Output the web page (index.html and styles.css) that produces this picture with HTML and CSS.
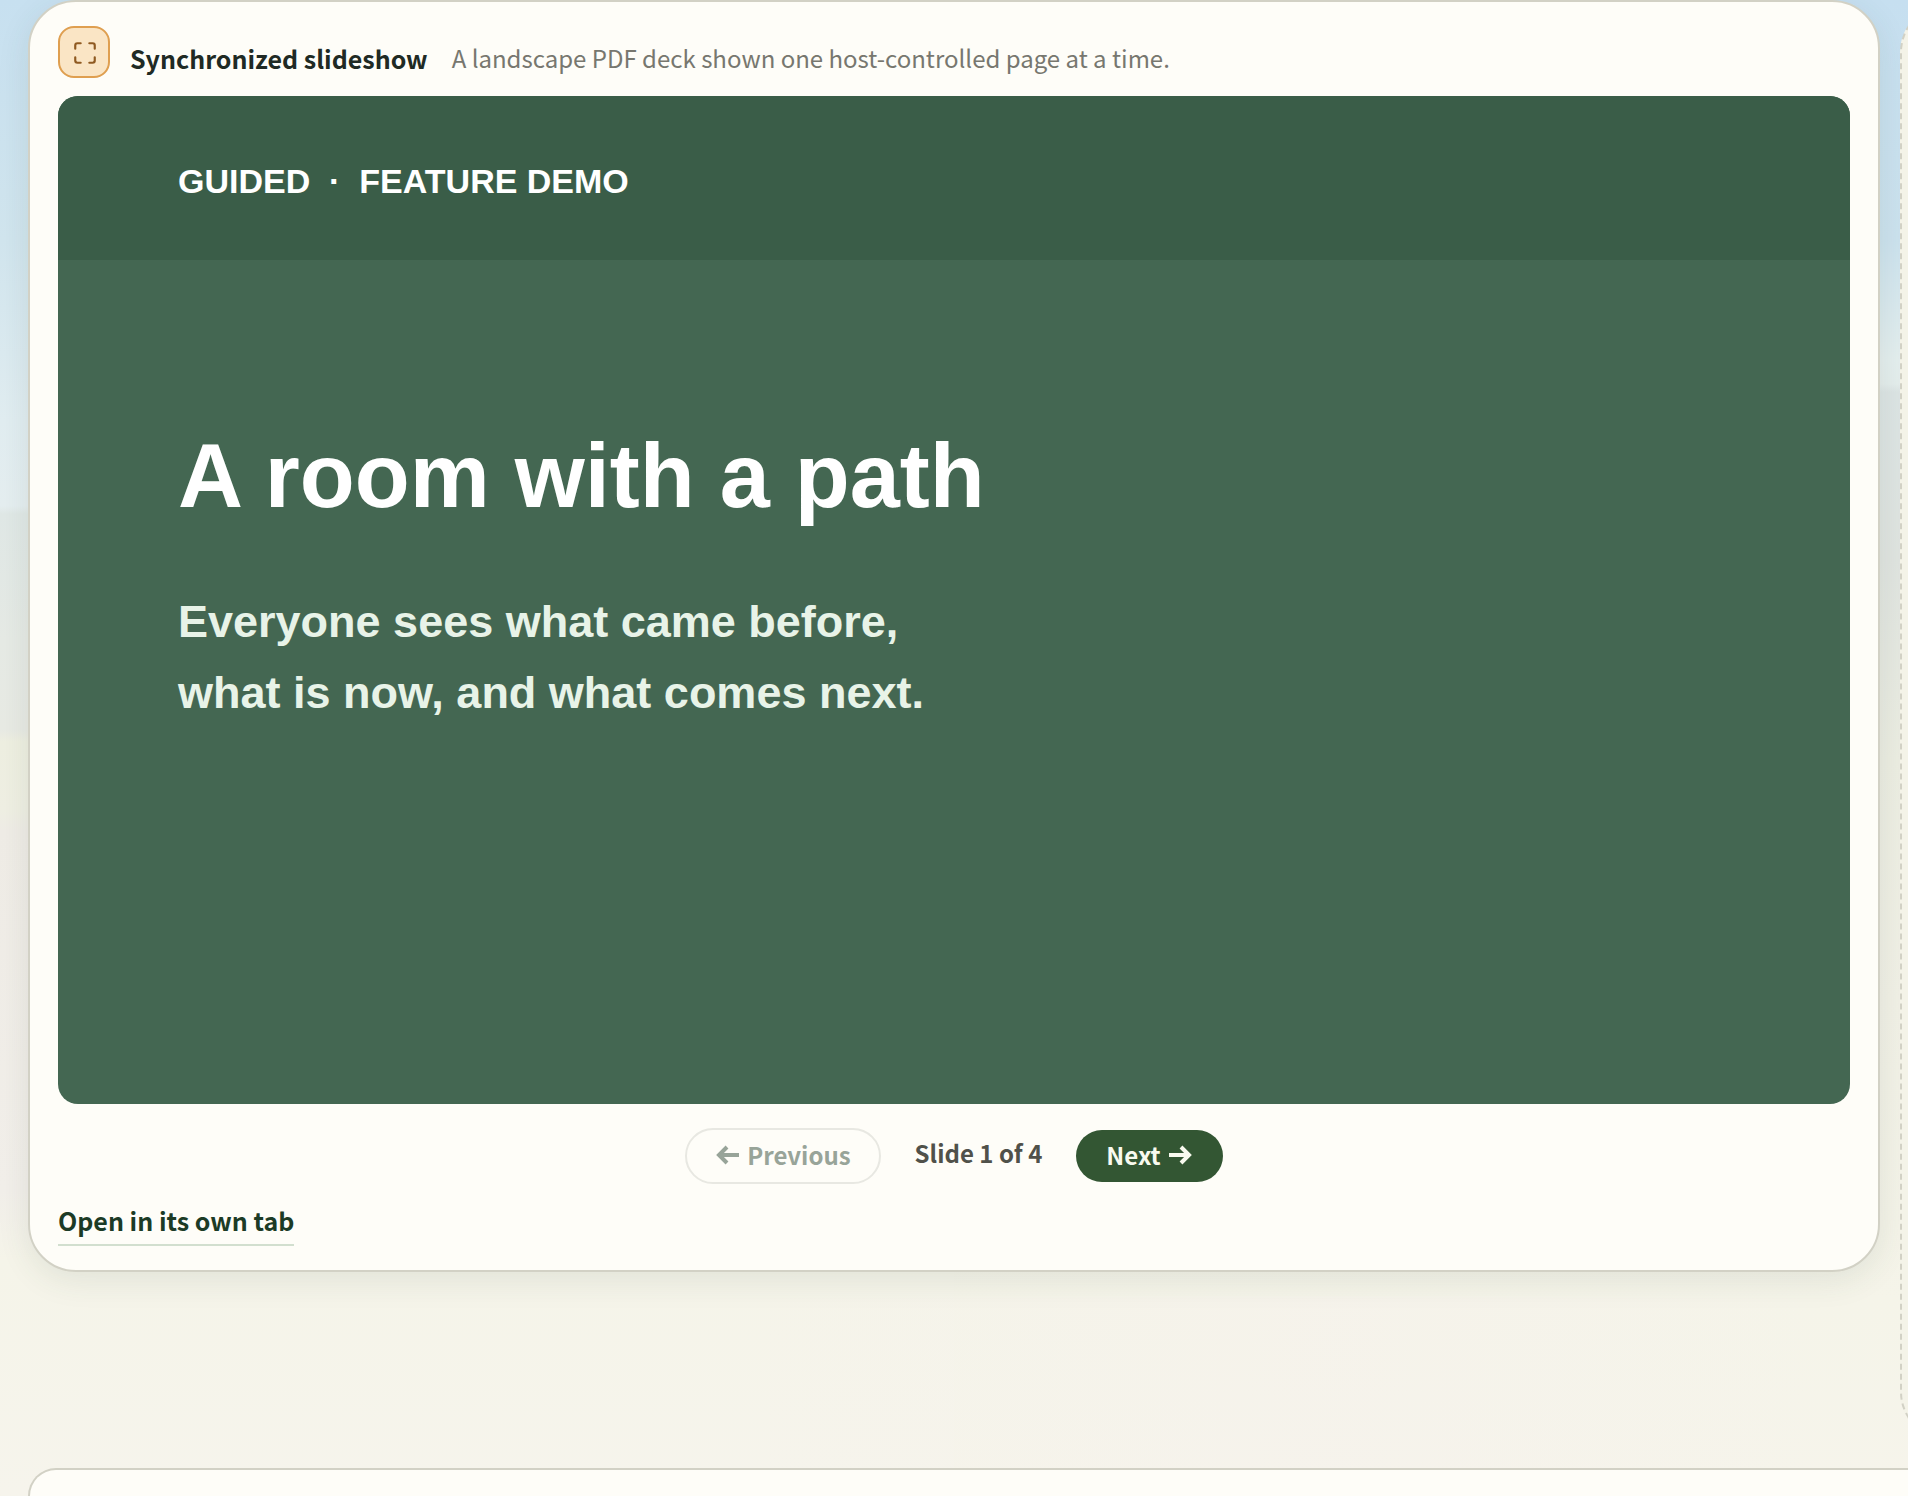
FILE: index.html
```html
<!DOCTYPE html>
<html lang="en">
<head>
<meta charset="utf-8">
<meta name="viewport" content="width=device-width, initial-scale=1">
<title>Synchronized slideshow</title>
<link rel="stylesheet" href="styles.css">
</head>
<body>
<main class="page">
  <div class="track">
    <article class="card">
      <header class="card-header">
        <span class="badge">
          <svg class="badge-icon" viewBox="0 0 24 24" aria-hidden="true">
            <path d="M8 3H5a2 2 0 0 0-2 2v3"/>
            <path d="M16 3h3a2 2 0 0 1 2 2v3"/>
            <path d="M8 21H5a2 2 0 0 1-2-2v-3"/>
            <path d="M16 21h3a2 2 0 0 0 2-2v-3"/>
          </svg>
        </span>
        <h2 class="card-title">Synchronized slideshow</h2>
        <p class="card-note">A landscape PDF deck shown one host-controlled page at a time.</p>
      </header>
      <section class="slide" aria-label="Current slide">
        <div class="slide-band">GUIDED&nbsp; ·&nbsp; FEATURE DEMO</div>
        <div class="slide-body">
          <h1 class="slide-title">A room with a path</h1>
          <p class="slide-text">Everyone sees what came before,<br>what is now, and what comes next.</p>
        </div>
      </section>
      <nav class="controls" aria-label="Slides">
        <button class="button button-previous" type="button" disabled>
          <svg class="arrow" viewBox="0 0 24 20" aria-hidden="true"><path d="M24 10H4M12 2l-8 8 8 8"/></svg>
          Previous
        </button>
        <span class="position">Slide 1 of 4</span>
        <button class="button button-next" type="button">
          Next
          <svg class="arrow" viewBox="0 0 24 20" aria-hidden="true"><path d="M0 10h20M12 2l8 8-8 8"/></svg>
        </button>
      </nav>
      <a class="open-link" href="#">Open in its own tab</a>
    </article>
    <aside class="upcoming" aria-label="Next step"></aside>
  </div>
  <section class="panel" aria-label="Details"></section>
</main>
</body>
</html>
```
FILE: styles.css
```css
* {
  box-sizing: border-box;
}

body {
  margin: 0;
  font-family: "Noto Sans CJK SC", "Noto Sans", sans-serif;
  color: #202a24;
  background-color: #f5f3ea;
}

h1, h2, p {
  margin: 0;
}

.page {
  display: flex;
  flex-direction: column;
  min-height: 100vh;
  padding-left: 28px;
  overflow: hidden;
  background:
    linear-gradient(to right, transparent 40%, rgba(246, 242, 236, 0.6) 70%, transparent 95%) bottom / 100% 200px no-repeat,
    linear-gradient(#c6dff0 0, #cce2ee 240px, #e4eeee 360px, #e4edec 384px, #dce4e4 392px, #e0e4e0 560px, #ecede2 760px, #f1f0e6 1000px, #f5f4e9 1300px, #f6f4eb 100%) right / 50% 100% no-repeat,
    linear-gradient(#c7e0f0 0, #d1e5ee 240px, #e1edf1 420px, #e5eef0 506px, #e0e8e6 514px, #e6eae5 640px, #e8eae4 730px, #eeefe1 742px, #efefe3 810px, #efece6 830px, #f2efea 1190px, #f5f4e9 1260px, #f6f4ec 100%);
}

.track {
  display: flex;
  align-items: flex-start;
  gap: 20px;
  padding-bottom: 28px;
}

.card {
  display: flex;
  flex: 0 0 calc(100% - 28px);
  flex-direction: column;
  padding: 24px 28px;
  border: 2px solid #d2d1c5;
  border-radius: 48px;
  background: #fefdf8;
  box-shadow: 0 8px 32px rgba(50, 75, 60, 0.1);
}

.card-header {
  display: flex;
  align-items: center;
  margin-bottom: 18px;
}

.badge {
  display: grid;
  flex: none;
  place-items: center;
  width: 52px;
  height: 52px;
  margin-right: 20px;
  padding: 2px 0 0 2px;
  border: 2px solid #df9f50;
  border-radius: 16px;
  background: #fae5c5;
}

.badge-icon {
  width: 26px;
  height: 26px;
  fill: none;
  stroke: #8f5a21;
  stroke-width: 2;
  stroke-linecap: round;
  stroke-linejoin: round;
}

.card-title,
.card-note {
  padding-top: 12px;
  line-height: 40px;
}

.card-title {
  margin-right: 24px;
  font-size: 25px;
  font-weight: 700;
}

.card-note {
  font-size: 24px;
  font-weight: 400;
  color: #77776f;
}

.slide {
  aspect-ratio: 16 / 9;
  overflow: hidden;
  border-radius: 20px;
  background: #446752;
  color: #fff;
  font-family: "Liberation Sans", Arial, sans-serif;
  font-weight: 700;
}

.slide-band {
  height: 164px;
  padding: 65px 120px 0;
  background: #3a5d48;
  font-size: 34px;
  line-height: 40px;
}

.slide-body {
  padding: 164px 120px 0;
}

.slide-title {
  margin-bottom: 58px;
  font-size: 90px;
  line-height: 104px;
}

.slide-text {
  font-size: 45px;
  line-height: 71px;
  color: #e8f3e8;
}

.controls {
  display: flex;
  align-items: center;
  justify-content: center;
  gap: 34px;
  margin-top: 24px;
}

.button {
  display: flex;
  align-items: center;
  justify-content: center;
  gap: 8px;
  height: 52px;
  padding: 0 30px 2px;
  border: 0;
  border-radius: 28px;
  font: inherit;
  font-size: 24px;
  font-weight: 700;
  line-height: 40px;
}

.button-previous {
  height: 56px;
  padding: 0 28px 2px;
  border: 2px solid #e8e8e2;
  background: transparent;
  color: #98a499;
}

.button-next {
  background: #335633;
  color: #f8faef;
}

.arrow {
  width: 24px;
  height: 20px;
  fill: none;
  stroke: currentColor;
  stroke-width: 4;
}

.position {
  padding-bottom: 6px;
  color: #50514a;
  font-size: 24px;
  font-weight: 700;
  line-height: 40px;
}

.open-link {
  align-self: flex-start;
  margin-top: 16px;
  padding-bottom: 4px;
  border-bottom: 2px solid #d2dfcf;
  color: #1c3b26;
  font-size: 25px;
  font-weight: 700;
  line-height: 40px;
  text-decoration: none;
}

.upcoming {
  flex: 0 0 50%;
  height: 1436px;
  margin-top: 4px;
  border: 2px dashed #d2d1c5;
  border-radius: 48px;
  background: #f4f3e8;
}

.panel {
  flex: 1 0 28px;
  margin-right: -48px;
  border: 2px solid #d2d1c5;
  border-bottom: 0;
  border-radius: 36px 36px 0 0;
  background: #fefdf8;
}
```
